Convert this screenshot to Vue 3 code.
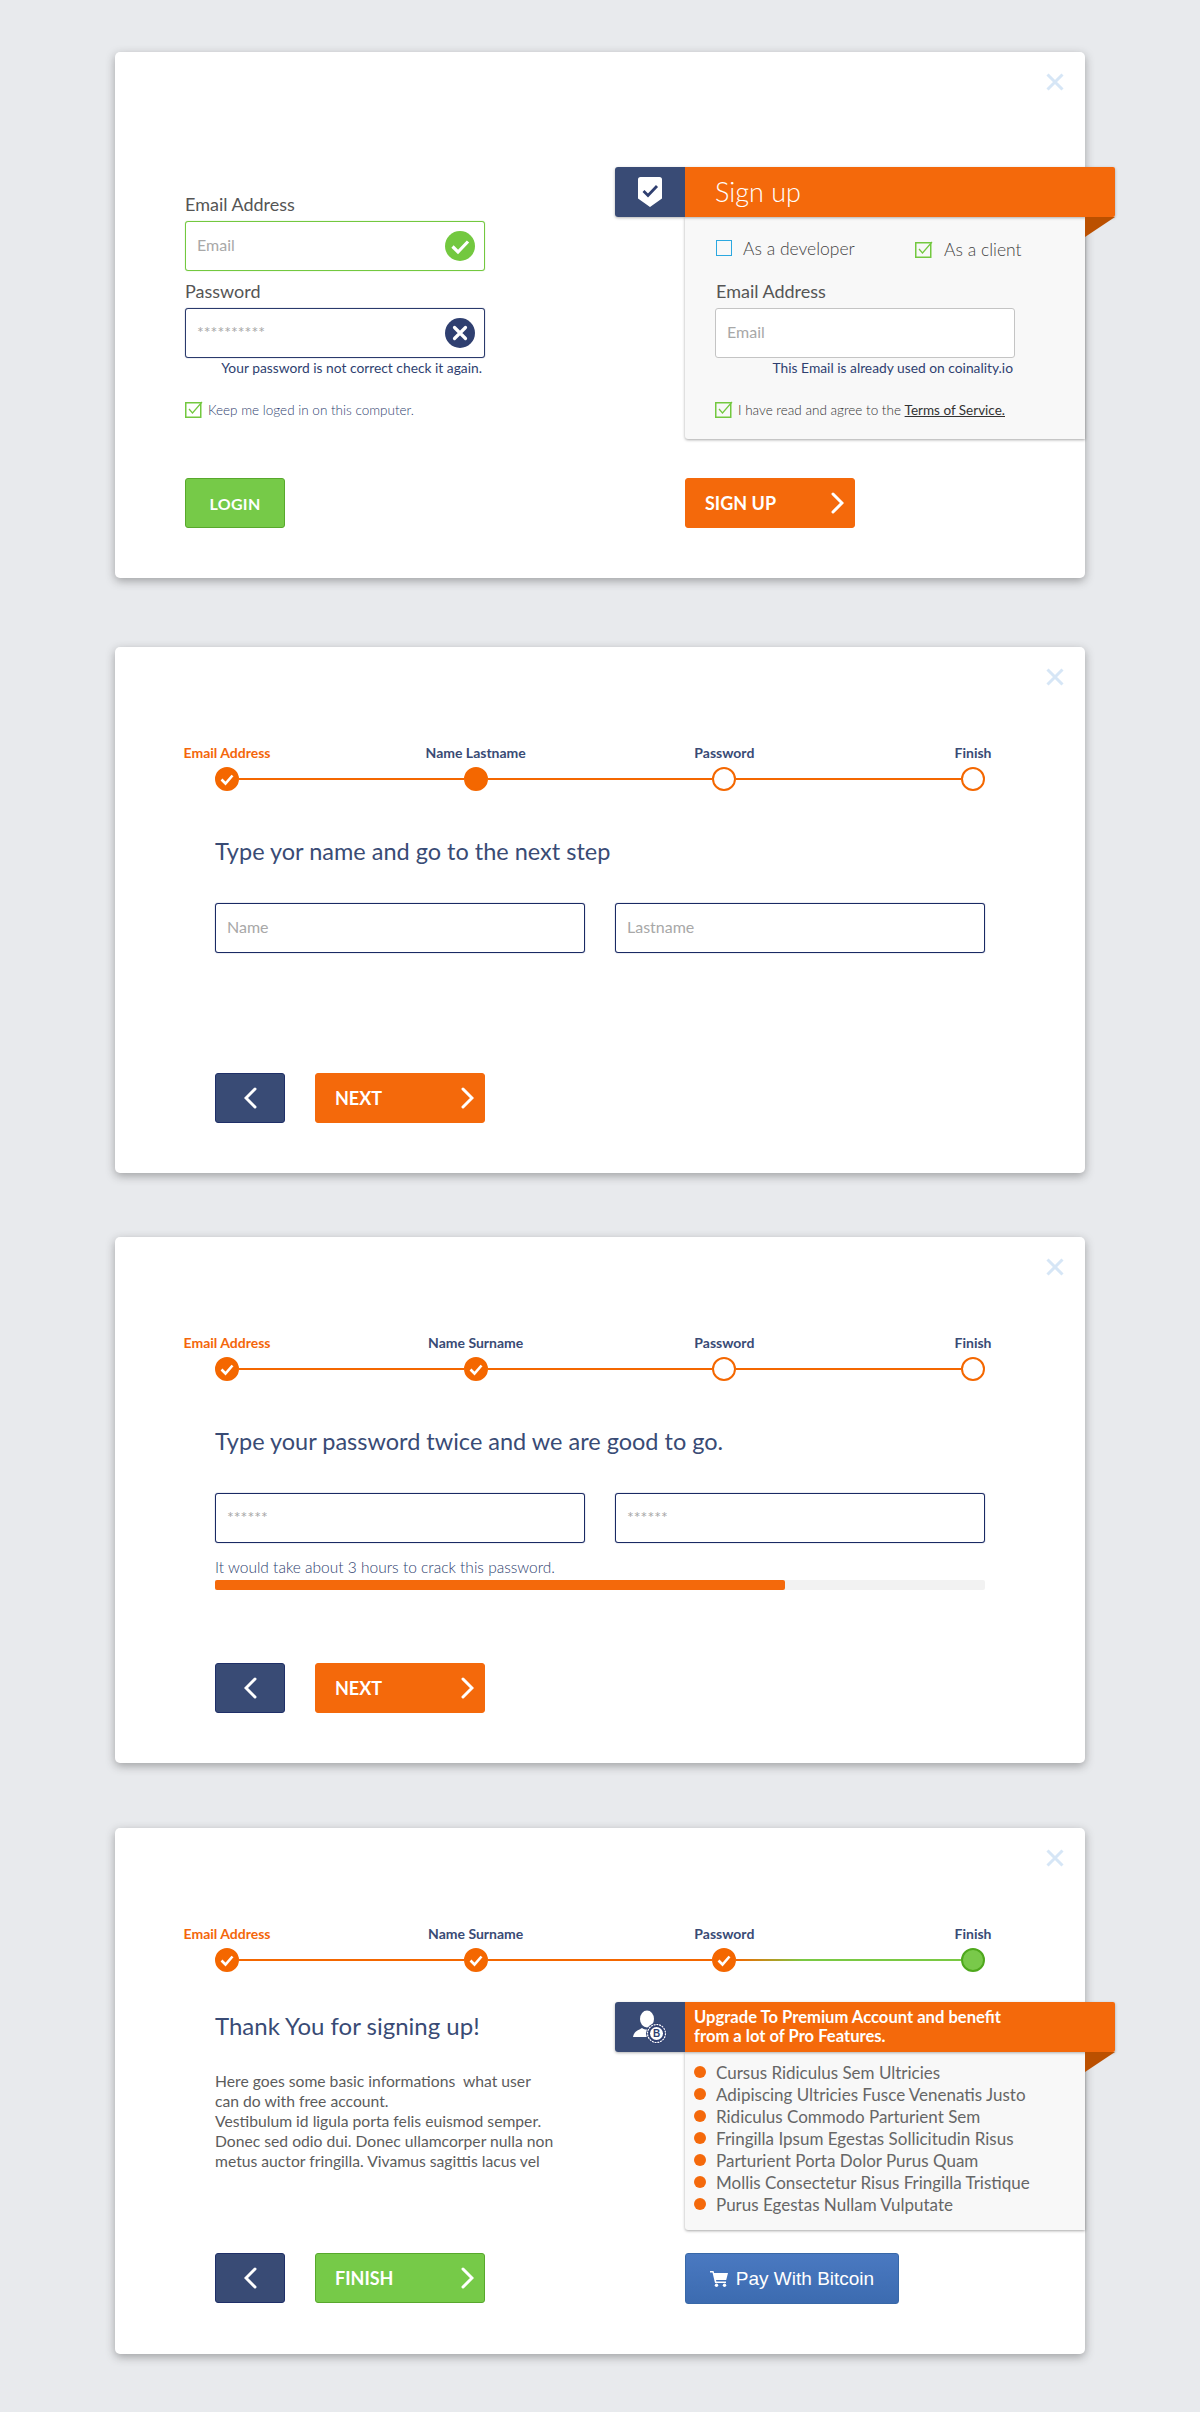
<template>
  <div class="page">
    <!-- login / sign up -->
    <section class="card card-login">
      <svg class="close" viewBox="0 0 18 18"><path d="M1.500 1.500l15 15M16.500 1.500l-15 15" /></svg>
      <div class="login-row">
        <div class="login-col">
          <label class="lbl">Email Address</label>
          <div class="field">
            <input class="inp inp-ok" placeholder="Email" />
            <svg class="field-ico" viewBox="0 0 30 30">
              <circle cx="15" cy="15" r="15" fill="#73c83f" />
              <path d="M7.500 15.500l5.500 5.500L23 10.500" fill="none" stroke="#fff" stroke-width="3.200" />
            </svg>
          </div>
          <label class="lbl lbl-next">Password</label>
          <div class="field">
            <input class="inp inp-navy" placeholder="**********" />
            <svg class="field-ico" viewBox="0 0 30 30">
              <circle cx="15" cy="15" r="15" fill="#2f3f70" />
              <path d="M9.500 9.500l11 11M20.500 9.500l-11 11" fill="none" stroke="#fff" stroke-width="3.200" stroke-linecap="round" />
            </svg>
          </div>
          <p class="err err-left">Your password is not correct check it again.</p>
          <div class="check-row keep">
            <svg class="cb" viewBox="0 0 18 17"><path class="cb-box" d="M.75 1.750h15v14.500h-15z" /><path class="cb-tick" d="M4 8l3.500 4L17 1" /></svg>
            <span>Keep me loged in on this computer.</span>
          </div>
        </div>

        <aside class="promo">
          <div class="ribbon">
            <div class="ribbon-ico">
              <svg class="shield" viewBox="0 0 24 30">
                <path d="M2.500 0h19A2.500 2.500 0 0 1 24 2.500V21.500L12 30 0 21.500V2.500A2.500 2.500 0 0 1 2.500 0z" fill="#fff" />
                <path d="M5.500 14l4.500 4.500L19 9" fill="none" stroke="#2f3f70" stroke-width="2.800" />
              </svg>
            </div>
            <div class="ribbon-title">Sign up</div>
            <i class="fold"></i>
          </div>
          <div class="panel panel-signup">
            <div class="roles">
              <div class="role role-dev"><i class="box-blue"></i><span>As a developer</span></div>
              <div class="role role-client">
                <svg class="cb" viewBox="0 0 18 17"><path class="cb-box" d="M.75 1.750h15v14.500h-15z" /><path class="cb-tick" d="M4 8l3.500 4L17 1" /></svg>
                <span>As a client</span>
              </div>
            </div>
            <label class="lbl lbl-signup">Email Address</label>
            <input class="inp inp-grey" placeholder="Email" />
            <p class="err err-right">This Email is already used on coinality.io</p>
            <div class="check-row terms">
              <svg class="cb" viewBox="0 0 18 17"><path class="cb-box" d="M.75 1.750h15v14.500h-15z" /><path class="cb-tick" d="M4 8l3.500 4L17 1" /></svg>
              <span>I have read and agree to the <u>Terms of Service.</u></span>
            </div>
          </div>
        </aside>
      </div>
      <div class="foot foot-login">
        <button class="btn btn-green btn-login">LOGIN</button>
        <button class="btn btn-orange btn-wide btn-signup">
          <span>SIGN UP</span>
          <svg class="chev" viewBox="0 0 13 22"><path d="M2 2l9 9-9 9" /></svg>
        </button>
      </div>
    </section>

    <!-- wizard steps -->
    <section v-for="w in wizards" :key="w.id" class="card" :class="'card-' + w.id">
      <svg class="close" viewBox="0 0 18 18"><path d="M1.500 1.500l15 15M16.500 1.500l-15 15" /></svg>
      <div class="stepper">
        <template v-for="(s, i) in w.steps" :key="s.label">
          <div class="step">
            <div class="step-lbl" :class="{ first: i === 0 }">{{ s.label }}</div>
            <div class="dot" :class="s.state">
              <svg v-if="s.state === 'done'" viewBox="0 0 24 24"><path d="M6.500 12.500l4 4 7-8" /></svg>
            </div>
          </div>
          <div v-if="i < 3" class="link" :class="{ 'link-green': s.toGreen }"></div>
        </template>
      </div>

      <template v-if="w.id === 'name'">
        <h2 class="title">Type yor name and go to the next step</h2>
        <div class="pair">
          <input class="inp inp-dark" placeholder="Name" />
          <input class="inp inp-dark" placeholder="Lastname" />
        </div>
      </template>

      <template v-if="w.id === 'pass'">
        <h2 class="title">Type your password twice and we are good to go.</h2>
        <div class="pair">
          <input class="inp inp-dark" placeholder="******" />
          <input class="inp inp-dark" placeholder="******" />
        </div>
        <p class="crack">It would take about 3 hours to crack this password.</p>
        <div class="meter"><div class="meter-fill" :style="{ width: strength + '%' }"></div></div>
      </template>

      <div v-if="w.id === 'done'" class="done-row">
        <div class="done-text">
          <h2 class="title title-done">Thank You for signing up!</h2>
          <p class="info">Here goes some basic informations&nbsp; what user<br />can do with free account.<br />Vestibulum id ligula porta felis euismod semper.<br />Donec sed odio dui. Donec ullamcorper nulla non<br />metus auctor fringilla. Vivamus sagittis lacus vel</p>
        </div>
        <aside class="promo promo-done">
          <div class="ribbon">
            <div class="ribbon-ico">
              <svg class="user" viewBox="0 0 34 34">
                <ellipse cx="14" cy="9" rx="7" ry="8.500" fill="#fff" />
                <path d="M0 27c1-6 6-7 9-9 3 2 7 2 10 0 2 1 3 1.500 4 2.500L15 27z" fill="#fff" />
                <circle cx="23.500" cy="23.500" r="10.500" fill="#2f3f70" />
                <circle cx="23.500" cy="23.500" r="9" fill="none" stroke="#fff" stroke-width="1.200" stroke-dasharray="2 .8" />
                <circle cx="23.500" cy="23.500" r="6.500" fill="#fff" />
                <text x="23.500" y="27" text-anchor="middle" class="coin">B</text>
              </svg>
            </div>
            <div class="ribbon-title ribbon-title-sm">Upgrade To Premium Account and benefit<br />from a lot of Pro Features.</div>
            <i class="fold"></i>
          </div>
          <ul class="panel panel-list">
            <li v-for="f in features" :key="f">{{ f }}</li>
          </ul>
        </aside>
      </div>

      <div class="foot">
        <button class="btn btn-navy">
          <svg class="chev" viewBox="0 0 13 22"><path d="M11 2l-9 9 9 9" /></svg>
        </button>
        <button class="btn btn-wide" :class="w.id === 'done' ? 'btn-green' : 'btn-orange'">
          <span>{{ w.id === 'done' ? 'FINISH' : 'NEXT' }}</span>
          <svg class="chev" viewBox="0 0 13 22"><path d="M2 2l9 9-9 9" /></svg>
        </button>
        <button v-if="w.id === 'done'" class="btn-pay">
          <svg class="cart" viewBox="0 0 18 16">
            <path d="M0 0h3.500l.6 2H18l-1.800 7H6l.4 1.500H16V12H5L2.500 1.500H0z" fill="#fff" />
            <circle cx="6.500" cy="14.300" r="1.700" fill="#fff" />
            <circle cx="14.500" cy="14.300" r="1.700" fill="#fff" />
          </svg>
          Pay With Bitcoin
        </button>
      </div>
    </section>
  </div>
</template>

<script setup>
const strength = 74

const wizards = [
  {
    id: 'name',
    steps: [
      { label: 'Email Address', state: 'done' },
      { label: 'Name Lastname', state: 'current' },
      { label: 'Password', state: 'todo' },
      { label: 'Finish', state: 'todo' },
    ],
  },
  {
    id: 'pass',
    steps: [
      { label: 'Email Address', state: 'done' },
      { label: 'Name Surname', state: 'done' },
      { label: 'Password', state: 'todo' },
      { label: 'Finish', state: 'todo' },
    ],
  },
  {
    id: 'done',
    steps: [
      { label: 'Email Address', state: 'done' },
      { label: 'Name Surname', state: 'done' },
      { label: 'Password', state: 'done', toGreen: true },
      { label: 'Finish', state: 'finish' },
    ],
  },
]

const features = [
  'Cursus Ridiculus Sem Ultricies',
  'Adipiscing Ultricies Fusce Venenatis Justo',
  'Ridiculus Commodo Parturient Sem',
  'Fringilla Ipsum Egestas Sollicitudin Risus',
  'Parturient Porta Dolor Purus Quam',
  'Mollis Consectetur Risus Fringilla Tristique',
  'Purus Egestas Nullam Vulputate',
]
</script>

<style>
html, body { background: #e8eaed; }
</style>

<style scoped>
.page {
  width: 1200px;
  height: 2412px;
  padding-top: 52px;
  box-sizing: border-box;
  background: #e8eaed;
  font-family: Lato, "Open Sans", sans-serif;
  display: flex;
  flex-direction: column;
  align-items: center;
}
.card {
  position: relative;
  width: 970px;
  height: 526px;
  flex: none;
  box-sizing: border-box;
  padding: 0 100px 50px;
  margin-bottom: 65px;
  background: #fff;
  border-radius: 5px;
  box-shadow: 0 3px 10px rgba(50, 50, 50, 0.4);
  display: flex;
  flex-direction: column;
}
.card-login { padding: 0 0 50px 70px; margin-bottom: 69px; }
.card-name { margin-bottom: 64px; }
.close {
  position: absolute;
  top: 21px;
  right: 21px;
  width: 18px;
  height: 18px;
}
.close path { fill: none; stroke: #d6e6f6; stroke-width: 3; }

/* login */
.login-row { display: flex; align-items: flex-start; }
.login-col { width: 300px; flex: none; padding-top: 142px; }
.lbl {
  display: block;
  height: 20px;
  line-height: 20px;
  margin-bottom: 7px;
  font-size: 18px;
  color: #555;
}
.lbl-next { margin-top: 10px; margin-bottom: 7px; }
.field { position: relative; height: 50px; }
.field-ico {
  position: absolute;
  top: 10px;
  right: 10px;
  width: 30px;
  height: 30px;
}
.inp {
  display: block;
  width: 100%;
  height: 50px;
  box-sizing: border-box;
  padding: 0 11px 3px;
  background: #fff;
  border: 1px solid #bbb;
  border-radius: 3px;
  outline: none;
  font-family: inherit;
  font-size: 16px;
}
.inp::placeholder { color: #a8a8a8; opacity: 1; }
.inp-ok { border-color: #73c83f; box-shadow: 0 0 1px rgba(115, 200, 63, 0.8); }
.inp-navy { border-color: #2a3a6c; box-shadow: 0 0 1px rgba(42, 58, 108, 0.8); }
.inp-dark { border-color: #1a2a64; box-shadow: 0 0 1px rgba(26, 42, 100, 0.8); }
.inp-grey { border-color: #c4c4c4; }
.err {
  margin: 2px 0 0;
  height: 16px;
  line-height: 16px;
  font-size: 13.8px;
  color: #2f3f70;
  text-align: right;
  white-space: nowrap;
}
.err-left { padding-right: 3px; }
.err-right { padding-right: 2px; }
.check-row {
  display: flex;
  align-items: center;
  gap: 5px;
  font-size: 13.5px;
  font-weight: 300;
  white-space: nowrap;
}
.keep { margin-top: 25px; color: #2f3f70; }
.terms { margin-top: 25px; color: #333; }
.terms u { color: #333; font-weight: 400; }
.cb { width: 18px; height: 17px; flex: none; }
.cb-box { fill: none; stroke: #73c83f; stroke-width: 1.5; }
.cb-tick { fill: none; stroke: #73c83f; stroke-width: 1.2; }

/* ribbon */
.promo { width: 500px; margin-left: 130px; margin-top: 115px; flex: none; }
.ribbon {
  position: relative;
  display: flex;
  height: 50px;
  box-shadow: 0 1px 3px rgba(0, 0, 0, 0.3);
  border-radius: 3px 2px 2px 3px;
}
.ribbon-ico {
  width: 70px;
  flex: none;
  display: flex;
  align-items: center;
  justify-content: center;
  background: #394b75;
  border-radius: 3px 0 0 3px;
}
.shield { width: 24px; height: 30px; }
.user { width: 34px; height: 34px; }
.coin { font-family: "Liberation Sans", sans-serif; font-size: 10px; font-weight: 700; fill: #2f3f70; }
.ribbon-title {
  flex: 1;
  padding-left: 30px;
  background: #f4690b;
  color: #fff;
  font-size: 27px;
  font-weight: 300;
  line-height: 50px;
  border-radius: 0 2px 2px 0;
}
.ribbon-title-sm {
  padding-left: 9px;
  font-size: 16.6px;
  font-weight: 700;
  line-height: 19px;
  padding-top: 6px;
}
.fold {
  position: absolute;
  top: 50px;
  right: 0;
  width: 30px;
  height: 20px;
  background: #bb5000;
  clip-path: polygon(0 0, 100% 0, 0 100%);
}
.panel {
  margin: 0 0 0 70px;
  width: 400px;
  box-sizing: border-box;
  background: #f8f8f8;
  border-radius: 0 0 0 3px;
  box-shadow: 0 1px 3px rgba(0, 0, 0, 0.35);
}
.panel-signup { height: 222px; padding: 21px 0 0 30px; }
.panel-signup .inp, .panel-signup .err { width: 300px; }
.panel-signup .err { box-sizing: border-box; }
.roles { display: flex; height: 20px; font-size: 17.5px; font-weight: 300; color: #444; white-space: nowrap; }
.role { display: flex; align-items: center; gap: 11px; height: 20px; }
.role-dev { width: 199px; margin-left: 1px; }
.role-client { margin-top: 1px; }
.box-blue { display: block; width: 16px; height: 16px; box-sizing: border-box; border: 1.5px solid #2ba8e0; }
.lbl-signup { margin: 23px 0 7px 1px; }

/* stepper */
.stepper { display: flex; margin-top: 98px; flex: none; }
.step { width: 24px; flex: none; display: flex; flex-direction: column; align-items: center; }
.step-lbl {
  height: 16px;
  line-height: 16px;
  margin-bottom: 6px;
  font-size: 14px;
  font-weight: 700;
  color: #394b75;
  white-space: nowrap;
}
.step-lbl.first { color: #f4660a; }
.dot {
  width: 24px;
  height: 24px;
  box-sizing: border-box;
  border-radius: 50%;
  border: 2px solid #f46700;
  background: #f46700;
}
.dot svg { display: block; width: 24px; height: 24px; margin: -2px; }
.dot path { fill: none; stroke: #fff; stroke-width: 2.6; }
.dot.todo { background: #fff; }
.dot.finish { background: #79c94a; border-color: #4ea81c; }
.link { flex: 1; height: 2px; margin-top: 33px; background: #f46700; }
.link-green { background: linear-gradient(90deg, #f46700, #7ac943 30%); }

.title {
  margin: 45px 0 37px;
  height: 30px;
  line-height: 30px;
  font-size: 23.5px;
  font-weight: 400;
  color: #394b75;
  flex: none;
}
.pair { display: flex; gap: 30px; }
.pair .inp { flex: 1; width: auto; min-width: 0; }
.crack {
  margin: 15px 0 0;
  height: 18px;
  line-height: 18px;
  font-size: 15.5px;
  font-weight: 300;
  color: #2f3f70;
}
.meter { height: 10px; margin-top: 4px; background: #f2f2f2; border-radius: 2px; }
.meter-fill { height: 10px; background: #f4690b; border-radius: 2px; }

/* finish */
.done-row { display: flex; align-items: flex-start; }
.done-text { width: 400px; flex: none; }
.title-done { margin: 39px 0 30px; font-size: 24px; }
.info { margin: 0; font-size: 15.7px; line-height: 20px; color: #5c5c5c; white-space: nowrap; }
.promo-done { margin: 30px 0 0 0; }
.panel-list { list-style: none; padding: 9px 0 0 9px; height: 178px; }
.panel-list li {
  display: flex;
  align-items: center;
  gap: 10px;
  height: 22px;
  font-size: 17px;
  color: #666;
  white-space: nowrap;
}
.panel-list li::before {
  content: "";
  width: 12px;
  height: 12px;
  border-radius: 50%;
  background: #f4690b;
  flex: none;
}

/* buttons */
.foot { display: flex; gap: 30px; margin-top: auto; align-items: stretch; }
.foot-login { gap: 400px; }
.btn {
  height: 50px;
  box-sizing: border-box;
  padding: 0;
  border: 1px solid transparent;
  border-radius: 3px;
  color: #fff;
  font-family: inherit;
  font-weight: 700;
  font-size: 18px;
  display: flex;
  align-items: center;
  justify-content: center;
}
.btn-login { width: 100px; font-size: 16px; letter-spacing: 0.3px; background: #7ecb50; border-color: #58a82c; }
.btn-green { background: #76ca48; border-color: #58a82c; }
.btn-orange { background: #f4690b; border-color: #f4690b; }
.btn-navy { width: 70px; background: #394b75; border-color: #1f2f68; }
.btn-wide { width: 170px; justify-content: space-between; padding: 0 10px 0 19px; }
.chev { width: 13px; height: 22px; }
.chev path { fill: none; stroke: #fff; stroke-width: 3; stroke-linecap: round; }
.btn-pay {
  width: 214px;
  height: 51px;
  margin-left: 170px;
  display: flex;
  align-items: center;
  justify-content: center;
  gap: 8px;
  border: 1px solid #3868a8;
  border-radius: 3px;
  background: linear-gradient(#4a79c1, #3c6bb0);
  color: #fff;
  font-family: "Liberation Sans", Arial, sans-serif;
  font-size: 19px;
}
.cart { width: 18px; height: 16px; }
</style>
